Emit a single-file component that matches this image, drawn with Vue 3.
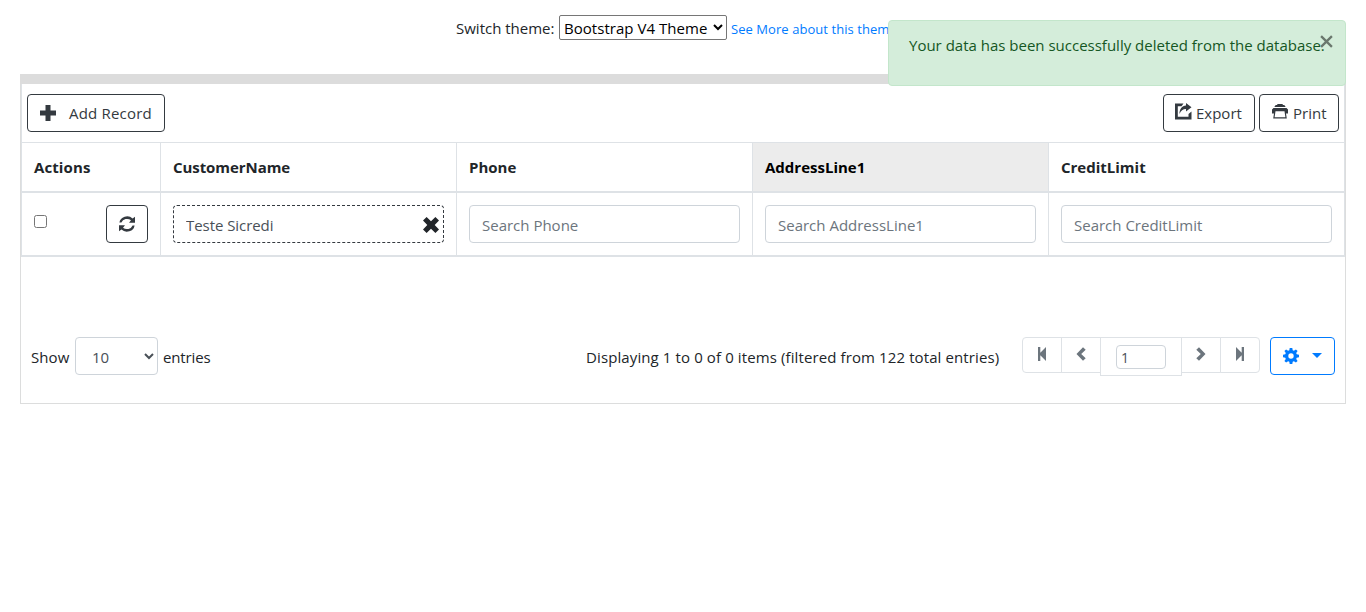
<script setup>
import { ref } from 'vue'

const theme = ref('Bootstrap V4 Theme')
const perPage = ref('10')
const page = ref('1')
const filters = ref([
  { name: 'CustomerName', cls: 'customer', value: 'Teste Sicredi' },
  { name: 'Phone', cls: 'phone', value: '' },
  { name: 'AddressLine1', cls: 'address', value: '' },
  { name: 'CreditLimit', cls: 'credit', value: '' }
])
</script>

<template>
  <div class="page">
    <div class="switcher">
      <span class="switch-label">Switch theme:</span>
      <select v-model="theme" class="theme-select"><option>Bootstrap V4 Theme</option></select>
      <a class="more">See More about this theme</a>
    </div>

    <div class="alert" role="alert">
      <span class="alert-text">Your data has been successfully deleted from the database.</span>
      <svg class="close" viewBox="0 0 12 12"><path d="M1 1 11 11M11 1 1 11" /></svg>
    </div>

    <main class="grid-box">
      <section class="table-area">
        <div class="toolbar">
          <button class="btn add">
            <svg class="i-plus" viewBox="0 0 16 16"><path d="M5.500 0h5v5.500H16v5h-5.500V16h-5v-5.500H0v-5h5.500z" /></svg>
            <span class="t-add">Add Record</span>
          </button>
          <div class="tools">
            <button class="btn export">
              <svg class="i-export" viewBox="0 0 17 17"><path d="M0 .5h8.500L6.500 3.200H2.800V13.700h10.700V11l3-2.500v8H0z" /><path d="M11 0 16.500 4.200 11 8.400V6C8 6 5.800 7.500 4.500 11 4.300 6 7 2.600 11 2.400z" /></svg>
              <span class="t-export">Export</span>
            </button>
            <button class="btn print">
              <svg class="i-print" viewBox="0 0 16 15"><path d="M5.300 0h5.400v1h1.600l1.400 2H2.300l1.400-2h1.600z" /><path fill-rule="evenodd" d="M1.500 4h13L16 5.500V9.500h-2l.8 5H1.200l.8-5H0V5.500zM3.500 7.200 2.600 13.300h10.800L12.500 7.200z" /></svg>
              <span class="t-print">Print</span>
            </button>
          </div>
        </div>

        <div class="row head">
          <div class="cell"><span class="t-actions">Actions</span></div>
          <div v-for="f in filters" :key="f.name" class="cell" :class="{ hovered: f.name === 'AddressLine1' }">
            <span :class="'h-' + f.cls">{{ f.name }}</span>
          </div>
        </div>

        <div class="row search">
          <div class="cell actions">
            <input type="checkbox" class="check">
            <button class="btn refresh">
              <svg class="i-refresh" viewBox="0 0 16 16"><path d="M.4 6.500A7.800 7.200 0 0 1 13.600 2.400L16 .8v6h-6l2-2.500A6 5.500 0 0 0 2.400 6.500z" /><path d="M15.600 9.500A7.800 7.200 0 0 1 2.400 13.600L0 15.200v-6h6l-2 2.500A6 5.500 0 0 0 13.600 9.500z" /></svg>
            </button>
          </div>
          <div v-for="f in filters" :key="f.name" class="cell field">
            <input v-model="f.value" class="filter" :class="['f-' + f.cls, { filled: f.value }]" :placeholder="'Search ' + f.name">
            <svg v-if="f.value" class="clear" viewBox="0 0 16 16"><path d="M3.600 0 8 4.300 12.400 0 16 3.600 11.700 8 16 12.400 12.400 16 8 11.700 3.600 16 0 12.400 4.300 8 0 3.600z" /></svg>
          </div>
        </div>
      </section>

      <footer class="footer">
        <div class="entries">
          <span class="t-show">Show</span>
          <select v-model="perPage" class="count"><option>10</option></select>
          <span class="t-entries">entries</span>
        </div>
        <div class="right">
          <span class="summary">Displaying 1 to 0 of 0 items (filtered from 122 total entries)</span>
          <div class="pager">
            <button class="pg first"><svg viewBox="0 0 16 16"><path d="M4 1h2.300v5.700L12 1v14L6.300 9.300V15H4z" /></svg></button>
            <button class="pg"><svg viewBox="0 0 16 16"><path d="M10 1.300 12.700 3.700 8.200 8l4.500 4.300L10 14.700 3.500 8z" /></svg></button>
            <div class="pg current"><input v-model="page" class="page-input"></div>
            <button class="pg next"><svg viewBox="0 0 16 16"><path d="M6 1.300 3.300 3.700 7.800 8l-4.500 4.300L6 14.700 12.500 8z" /></svg></button>
            <button class="pg last"><svg viewBox="0 0 16 16"><path d="M12 1H9.700v5.700L4 1v14l5.700-5.700V15H12z" /></svg></button>
          </div>
          <button class="btn settings">
            <svg class="i-gear" viewBox="0 0 16 16"><path fill-rule="evenodd" d="M6.700 0h2.600l.4 2.300 1.200.5 2-1.400 1.700 1.700-1.400 2 .5 1.200 2.300.4v2.600l-2.300.4-.5 1.200 1.400 2-1.700 1.700-2-1.400-1.200.5-.4 2.300H6.700l-.4-2.300-1.200-.5-2 1.400-1.700-1.700 1.400-2-.5-1.200L0 9.300V6.700l2.300-.4.5-1.200-1.400-2 1.700-1.700 2 1.400 1.200-.5zM8 5.300a2.700 2.700 0 1 0 0 5.400 2.700 2.700 0 0 0 0-5.400z" /></svg>
            <i class="caret"></i>
          </button>
        </div>
      </footer>
    </main>
  </div>
</template>

<style>
body { background: #fff; }
</style>

<style scoped>
.page, .page *, .page *::before { box-sizing: border-box; }
.page {
  position: relative;
  width: 1366px;
  height: 612px;
  padding: 0 20px;
  overflow: hidden;
  color: #212529;
  font: 15px/24px "Open Sans", "Noto Sans", sans-serif;
}
.page span, .page a { white-space: nowrap; }
button, input, select { margin: 0; font: inherit; }
svg { display: block; flex: none; fill: currentColor; }
.switcher { display: flex; align-items: flex-start; height: 74px; padding: 15px 0 0 436px; }
.switch-label { width: 103px; padding-top: 1px; }
.theme-select {
  width: 168px;
  height: 25px;
  padding: 0;
  color: #000;
  background: #fff;
  border: 1px solid #767676;
  border-radius: 2px;
  letter-spacing: 0.04px;
}
.more { margin-left: 4px; padding-top: 2px; color: #007bff; font-size: 13px; letter-spacing: 0.06px; }
.alert {
  position: absolute;
  z-index: 2;
  top: 20px;
  left: 888px;
  width: 458px;
  height: 66px;
  padding: 12px 20px;
  color: #155724;
  background: #d4edda;
  border: 1px solid #c3e6cb;
  border-radius: 4px;
}
.close { position: absolute; top: 14px; right: 12px; width: 13px; height: 13px; fill: none; stroke: #6a776d; stroke-width: 2.1; }
.grid-box { height: 330px; border: 1px solid #dcdddd; border-top-width: 0; }
.grid-box::before { content: ""; display: block; height: 10px; margin: 0 -1px; background: #dcdcdc; }
.table-area { height: 173px; border: solid #dee2e6; border-width: 0 1px; }
.toolbar { display: flex; justify-content: space-between; height: 58px; padding: 10px 5px 0; }
.tools { display: flex; gap: 4px; }
.btn {
  display: flex;
  align-items: center;
  height: 38px;
  padding: 0 12px;
  color: #343a40;
  background: #fff;
  border: 1px solid #343a40;
  border-radius: 4px;
}
.add { width: 138px; }
.t-add { letter-spacing: 0.2px; }
.i-plus { width: 16px; height: 16px; margin-right: 13px; }
.export { width: 92px; padding: 0 11px; }
.i-export { width: 17px; height: 17px; margin: -3px 4px 0 0; }
.print { width: 80px; }
.i-print { width: 16px; height: 15px; margin: -4px 5px 0 0; }
.row { display: grid; grid-template-columns: 138px repeat(4, 296px); }
.cell { border-left: 1px solid #dee2e6; padding: 12px; }
.cell:first-child { border-left: 0; }
.head { height: 51px; border-top: 1px solid #dee2e6; border-bottom: 2px solid #dee2e6; font-weight: 700; }
.hovered { color: #000; background: #ececec; }
.h-customer { letter-spacing: -0.07px; }
.t-actions { letter-spacing: 0.1px; }
.search { height: 64px; border-bottom: 2px solid #dee2e6; }
.actions { display: flex; justify-content: space-between; }
.check { width: 13px; height: 13px; margin-top: 10px; }
.refresh { width: 42px; }
.i-refresh { width: 16px; height: 16px; }
.field { position: relative; }
.filter {
  display: block;
  width: 271px;
  height: 38px;
  padding: 3px 12px 1px;
  color: #495057;
  background: #fff;
  border: 1px solid #ced4da;
  border-radius: 4px;
}
.filter::placeholder { color: #6c757d; opacity: 1; }
.filled { border: 1px dashed #343a40; letter-spacing: -0.06px; }
.clear { position: absolute; top: 24px; right: 17px; width: 16px; height: 16px; color: #212529; }
.footer { display: flex; justify-content: space-between; padding: 80px 10px 0; }
.entries { display: flex; align-items: center; height: 38px; }
.t-show { width: 44px; padding-top: 2px; letter-spacing: 0.1px; }
.t-entries { padding-top: 2px; letter-spacing: -0.15px; }
.count {
  width: 83px;
  height: 38px;
  margin-right: 5px;
  padding: 3px 0 1px 12px;
  color: #495057;
  background: #fff;
  border: 1px solid #ced4da;
  border-radius: 4px;
}
.right { display: flex; align-items: flex-start; }
.summary { width: 436px; padding-top: 8px; letter-spacing: 0.11px; }
.pager { display: flex; align-items: flex-start; margin-right: 10px; }
.pg {
  display: flex;
  justify-content: center;
  width: 40px;
  height: 36px;
  margin-right: -1px;
  padding: 8px 0 0;
  color: #6c757d;
  background: #fff;
  border: 1px solid #dee2e6;
}
.pg svg { width: 16px; height: 16px; }
.first { border-radius: 4px 0 0 4px; }
.last { margin-right: 0; border-radius: 0 4px 4px 0; }
.current { width: 82px; height: 39px; padding-top: 7px; }
.page-input {
  width: 50px;
  height: 24px;
  padding: 1px 4px 0;
  color: #495057;
  background: #fff;
  border: 1px solid #ced4da;
  border-radius: 4px;
  font-size: 14px;
}
.settings { width: 65px; color: #007bff; border-color: #007bff; }
.i-gear { width: 16px; height: 16px; }
.caret { margin: -2px 0 0 13px; border: solid transparent; border-width: 5px 5px 0; border-top-color: #007bff; }
</style>
